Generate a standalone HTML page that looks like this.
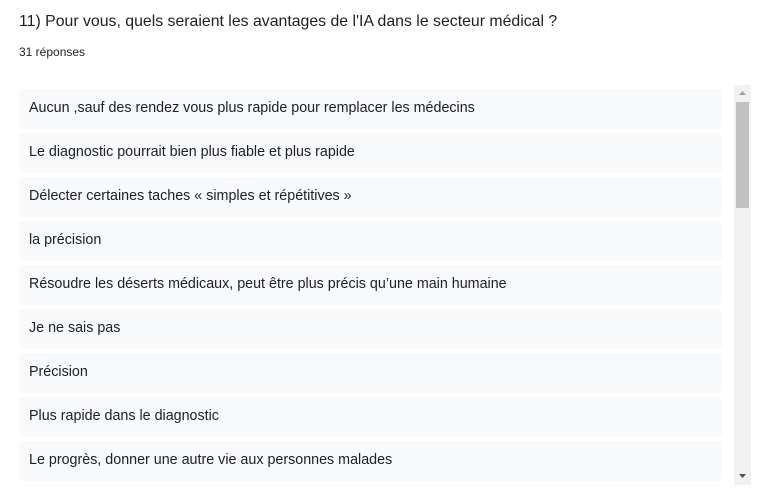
<!DOCTYPE html>
<html><head><style>
body{margin:0;width:758px;height:501px;background:#fff;font-family:"Liberation Sans",sans-serif;color:#202124;position:relative;overflow:hidden}
.t{position:absolute;left:19px;top:13px;font-size:15.85px}
.n{position:absolute;left:19px;top:45px;font-size:12px}
.b{position:absolute;left:19px;width:703px;height:40px;background:#f8f9fa;border-radius:4px;font-size:14.3px;line-height:39px;box-sizing:border-box;padding-left:10px}
.sb{position:absolute;left:734px;top:85px;width:17px;height:400px;background:#f1f1f1}
.th{position:absolute;left:736px;top:102px;width:13px;height:106px;background:#c1c1c1}
</style></head><body>
<div class="t">11) Pour vous, quels seraient les avantages de l'IA dans le secteur médical ?</div>
<div class="n">31 réponses</div>
<div class="b" style="top:89px">Aucun ,sauf des rendez vous plus rapide pour remplacer les médecins</div>
<div class="b" style="top:133px">Le diagnostic pourrait bien plus fiable et plus rapide</div>
<div class="b" style="top:177px">Délecter certaines taches « simples et répétitives »</div>
<div class="b" style="top:221px">la précision</div>
<div class="b" style="top:265px">Résoudre les déserts médicaux, peut être plus précis qu’une main humaine</div>
<div class="b" style="top:309px">Je ne sais pas</div>
<div class="b" style="top:353px">Précision</div>
<div class="b" style="top:397px">Plus rapide dans le diagnostic</div>
<div class="b" style="top:441px">Le progrès, donner une autre vie aux personnes malades</div>
<div class="sb"></div><div class="th"></div>
<svg style="position:absolute;left:738px;top:90px" width="9" height="6"><path d="M1 5L4.5 1L8 5Z" fill="#a3a3a3"/></svg>
<svg style="position:absolute;left:738px;top:473px" width="9" height="6"><path d="M1 1L4.5 5L8 1Z" fill="#505050"/></svg>
</body></html>
